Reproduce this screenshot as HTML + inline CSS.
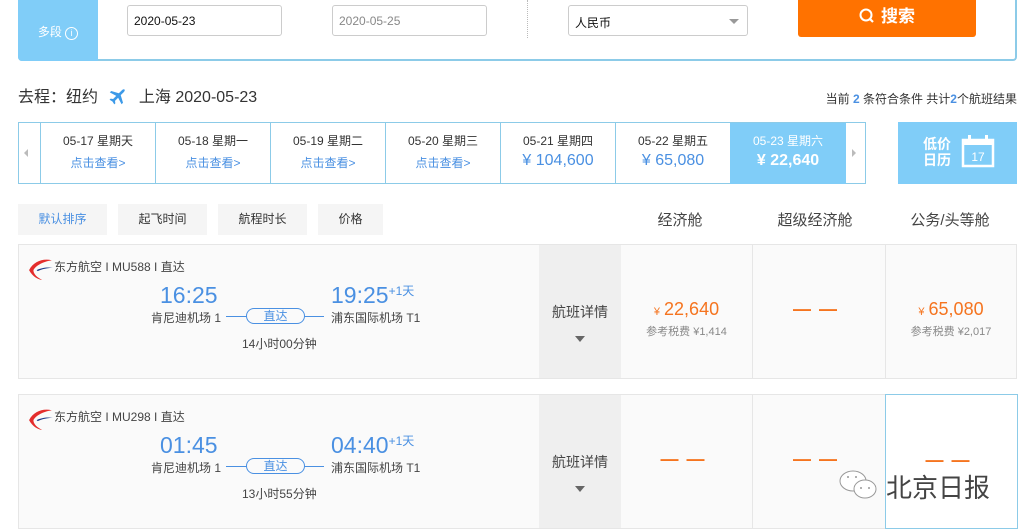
<!DOCTYPE html>
<html><head><meta charset="utf-8"><style>
*{margin:0;padding:0;box-sizing:border-box}
body{width:1019px;height:531px;overflow:hidden;background:#fff;font-family:"Liberation Sans","Noto Sans CJK SC",sans-serif;position:relative;color:#333}
.a{position:absolute}
.inp{position:absolute;top:5px;height:31px;border:1px solid #ccc;border-radius:3px;font-size:12px;padding:8px 6px;background:#fff}
.cell{position:absolute;top:0;height:61px;width:115px;border-left:1px solid #8ccbe8;text-align:center}
.cell .d{font-size:12px;color:#333;margin-top:9px}
.cell .l{font-size:12px;color:#4a90e2;margin-top:5px}
.cell .p{font-size:16px;color:#4a90e2;margin-top:3px}
.sb{position:absolute;top:204px;height:31px;background:#f5f5f5;font-size:12px;text-align:center;line-height:31px;color:#333}
.hd{position:absolute;top:209px;font-size:15px;color:#444;width:134px;text-align:center}
.row{position:absolute;left:18px;width:999px;height:135px;background:#fafafa;border:1px solid #e6e6e6}
.det{position:absolute;left:520px;top:0;width:82px;height:133px;background:#efefef;text-align:center;font-size:14px;color:#444}
.col{position:absolute;top:0;height:133px;border-left:1px solid #e6e6e6;text-align:center}
.pr{color:#f5741f;font-size:18px;margin-top:54px}
.pr small{font-size:11px;margin-right:4px}
.tx{font-size:11px;color:#888;margin-top:3px}
.dash{color:#f5741f;font-size:18px;margin-top:54px;letter-spacing:8px;font-weight:bold}
.time{position:absolute;font-size:23px;color:#4a90e2}
.ap{position:absolute;font-size:12px;color:#444}
.air{position:absolute;left:10px;top:13px;font-size:12px;color:#444}
</style></head><body>
<div class="a" style="left:18px;top:-4px;width:999px;height:65px;border:2px solid #8ccbe8;border-top:none;border-radius:0 0 4px 4px"></div>
<div class="a" style="left:18px;top:0;width:80px;height:61px;background:#80cdf8;border-radius:0 0 0 4px;color:#fff;font-size:12px;text-align:center;line-height:64px">多段 <span style="display:inline-block;width:13px;height:13px;border:1px solid #fff;border-radius:50%;font-size:9px;line-height:11px">i</span></div>
<div class="inp" style="left:127px;width:155px;color:#111">2020-05-23</div>
<div class="inp" style="left:332px;width:155px;color:#888">2020-05-25</div>
<div class="a" style="left:527px;top:0;height:38px;border-left:1px dotted #bbb"></div>
<div class="inp" style="left:568px;width:180px;color:#111">人民币<span style="position:absolute;right:8px;top:13px;border:5px solid transparent;border-top:5px solid #999"></span></div>
<div class="a" style="left:798px;top:0;width:178px;height:37px;background:#ff7200;border-radius:0 0 3px 3px;color:#fff;font-size:17px;font-weight:bold;text-align:center;line-height:34px"><svg width="16" height="16" viewBox="0 0 16 16" style="vertical-align:-2px;margin-right:6px"><circle cx="7" cy="7" r="5.5" fill="none" stroke="#fff" stroke-width="2"/><path d="M10.5 10.5L14 14" stroke="#fff" stroke-width="2.2"/></svg>搜索</div>

<div class="a" style="left:18px;top:83px;font-size:16px;color:#333">去程：纽约 <svg width="24" height="20" viewBox="0 0 24 24" style="vertical-align:-4px;margin:0 4px"><g transform="rotate(45 12 12)"><path d="M12 1c1.2 0 1.6 1.5 1.6 3v5l8.4 4.5v2.4l-8.4-2.5v5.3l2.4 1.8v1.8L12 21.4 8 22.3v-1.8l2.4-1.8v-5.3L2 15.9v-2.4L10.4 9V4c0-1.5.4-3 1.6-3z" fill="#3d9ae8"/></g></svg> 上海 2020-05-23</div>
<div class="a" style="right:2px;top:90px;font-size:12px;color:#333">当前 <b style="color:#4a90e2">2</b> 条符合条件 共计<b style="color:#4a90e2">2</b>个航班结果</div>

<div class="a" style="left:18px;top:122px;width:848px;height:62px;border:1px solid #8ccbe8">
<div class="a" style="left:5px;top:26px;border:4px solid transparent;border-right:4px solid #bbb;border-left:none"></div>
<div class="cell" style="left:21px"><div class="d">05-17 星期天</div><div class="l">点击查看&gt;</div></div>
<div class="cell" style="left:136px"><div class="d">05-18 星期一</div><div class="l">点击查看&gt;</div></div>
<div class="cell" style="left:251px"><div class="d">05-19 星期二</div><div class="l">点击查看&gt;</div></div>
<div class="cell" style="left:366px"><div class="d">05-20 星期三</div><div class="l">点击查看&gt;</div></div>
<div class="cell" style="left:481px"><div class="d">05-21 星期四</div><div class="p">¥ 104,600</div></div>
<div class="cell" style="left:596px"><div class="d">05-22 星期五</div><div class="p">¥ 65,080</div></div>
<div class="cell" style="left:711px;width:116px;background:#80cdf8;border:none;color:#fff"><div class="d" style="color:#fff">05-23 星期六</div><div class="p" style="color:#fff;font-weight:bold">¥ 22,640</div></div>
<div class="a" style="left:833px;top:26px;border:4px solid transparent;border-left:4px solid #bbb;border-right:none"></div>
</div>
<div class="a" style="left:898px;top:122px;width:119px;height:62px;background:#80cdf8;color:#fff">
<div class="a" style="left:25px;top:14px;font-size:14px;font-weight:bold;line-height:16px">低价<br>日历</div>
<svg class="a" style="left:63px;top:12px" width="34" height="34" viewBox="0 0 34 34"><rect x="2" y="6" width="30" height="26" fill="none" stroke="#fff" stroke-width="2.5"/><rect x="2" y="6" width="30" height="5" fill="#fff"/><rect x="7" y="1" width="3" height="8" fill="#fff"/><rect x="24" y="1" width="3" height="8" fill="#fff"/><text x="17" y="27" font-size="12" fill="#fff" text-anchor="middle" font-family="Liberation Sans">17</text></svg>
</div>

<div class="sb" style="left:18px;width:89px;color:#4a90e2">默认排序</div>
<div class="sb" style="left:118px;width:89px">起飞时间</div>
<div class="sb" style="left:218px;width:89px">航程时长</div>
<div class="sb" style="left:318px;width:65px">价格</div>
<div class="hd" style="left:613px">经济舱</div>
<div class="hd" style="left:748px">超级经济舱</div>
<div class="hd" style="left:883px">公务/头等舱</div>

<div class="row" style="top:244px">
<svg class="a" style="left:9px;top:12px" width="26" height="24" viewBox="0 0 24 22"><path d="M22 3C14 1 5 4 1 12c3 6 9 9 12 9-4-2-8-5-8-9 2-4 9-8 17-9z" fill="#e42d2d"/><path d="M8 12c4-2 10-3 15-2-5 0-10 1-14 3z" fill="#1e3a8a"/></svg>
<div class="air" style="left:35px">东方航空 I MU588 I 直达</div>
<div class="time" style="left:141px;top:37px">16:25</div>
<div class="time" style="left:312px;top:37px">19:25<span style="font-size:12px;vertical-align:8px">+1天</span></div>
<div class="ap" style="left:132px;top:64px">肯尼迪机场 1</div>
<div class="ap" style="left:312px;top:64px">浦东国际机场 T1</div>
<div class="a" style="left:207px;top:71px;width:98px;border-top:1px solid #4a90e2"></div>
<div class="a" style="left:227px;top:63px;width:59px;height:16px;border:1px solid #4a90e2;border-radius:8px;background:#fafafa;font-size:12px;color:#4a90e2;text-align:center;line-height:14px">直达</div>
<div class="ap" style="left:223px;top:90px">14小时00分钟</div>
<div class="det"><div style="margin-top:57px">航班详情</div><div style="margin:14px auto 0;width:0;border:5px solid transparent;border-top:6px solid #666"></div></div>
<div class="col" style="left:602px;width:131px;border-left:none"><div class="pr"><small>¥</small>22,640</div><div class="tx">参考税费 ¥1,414</div></div>
<div class="col" style="left:733px;width:133px"><div class="dash">——</div></div>
<div class="col" style="left:866px;width:131px"><div class="pr"><small>¥</small>65,080</div><div class="tx">参考税费 ¥2,017</div></div>
</div>

<div class="row" style="top:394px">
<svg class="a" style="left:9px;top:12px" width="26" height="24" viewBox="0 0 24 22"><path d="M22 3C14 1 5 4 1 12c3 6 9 9 12 9-4-2-8-5-8-9 2-4 9-8 17-9z" fill="#e42d2d"/><path d="M8 12c4-2 10-3 15-2-5 0-10 1-14 3z" fill="#1e3a8a"/></svg>
<div class="air" style="left:35px">东方航空 I MU298 I 直达</div>
<div class="time" style="left:141px;top:37px">01:45</div>
<div class="time" style="left:312px;top:37px">04:40<span style="font-size:12px;vertical-align:8px">+1天</span></div>
<div class="ap" style="left:132px;top:64px">肯尼迪机场 1</div>
<div class="ap" style="left:312px;top:64px">浦东国际机场 T1</div>
<div class="a" style="left:207px;top:71px;width:98px;border-top:1px solid #4a90e2"></div>
<div class="a" style="left:227px;top:63px;width:59px;height:16px;border:1px solid #4a90e2;border-radius:8px;background:#fafafa;font-size:12px;color:#4a90e2;text-align:center;line-height:14px">直达</div>
<div class="ap" style="left:223px;top:90px">13小时55分钟</div>
<div class="det"><div style="margin-top:57px">航班详情</div><div style="margin:14px auto 0;width:0;border:5px solid transparent;border-top:6px solid #666"></div></div>
<div class="col" style="left:602px;width:131px;border-left:none"><div class="dash">——</div></div>
<div class="col" style="left:733px;width:133px"><div class="dash">——</div></div>
<div class="col" style="left:866px;width:133px;top:-1px;height:135px;background:#fff;border:1px solid #8ccbe8"><div class="dash" style="margin-top:55px">——</div></div>
</div>

<svg class="a" style="left:838px;top:468px" width="42" height="34" viewBox="0 0 42 34"><ellipse cx="15" cy="13" rx="13" ry="10" fill="#fff" stroke="#999" stroke-width="1"/><ellipse cx="27" cy="21" rx="11" ry="9" fill="#fff" stroke="#999" stroke-width="1"/><circle cx="10" cy="9" r="1" fill="#999"/><circle cx="18" cy="9" r="1" fill="#999"/><circle cx="23" cy="20" r="1" fill="#999"/><circle cx="31" cy="20" r="1" fill="#999"/></svg>
<div class="a" style="left:886px;top:468px;font-size:26px;color:#444;text-shadow:0 0 2px #fff">北京日报</div>
</body></html>
